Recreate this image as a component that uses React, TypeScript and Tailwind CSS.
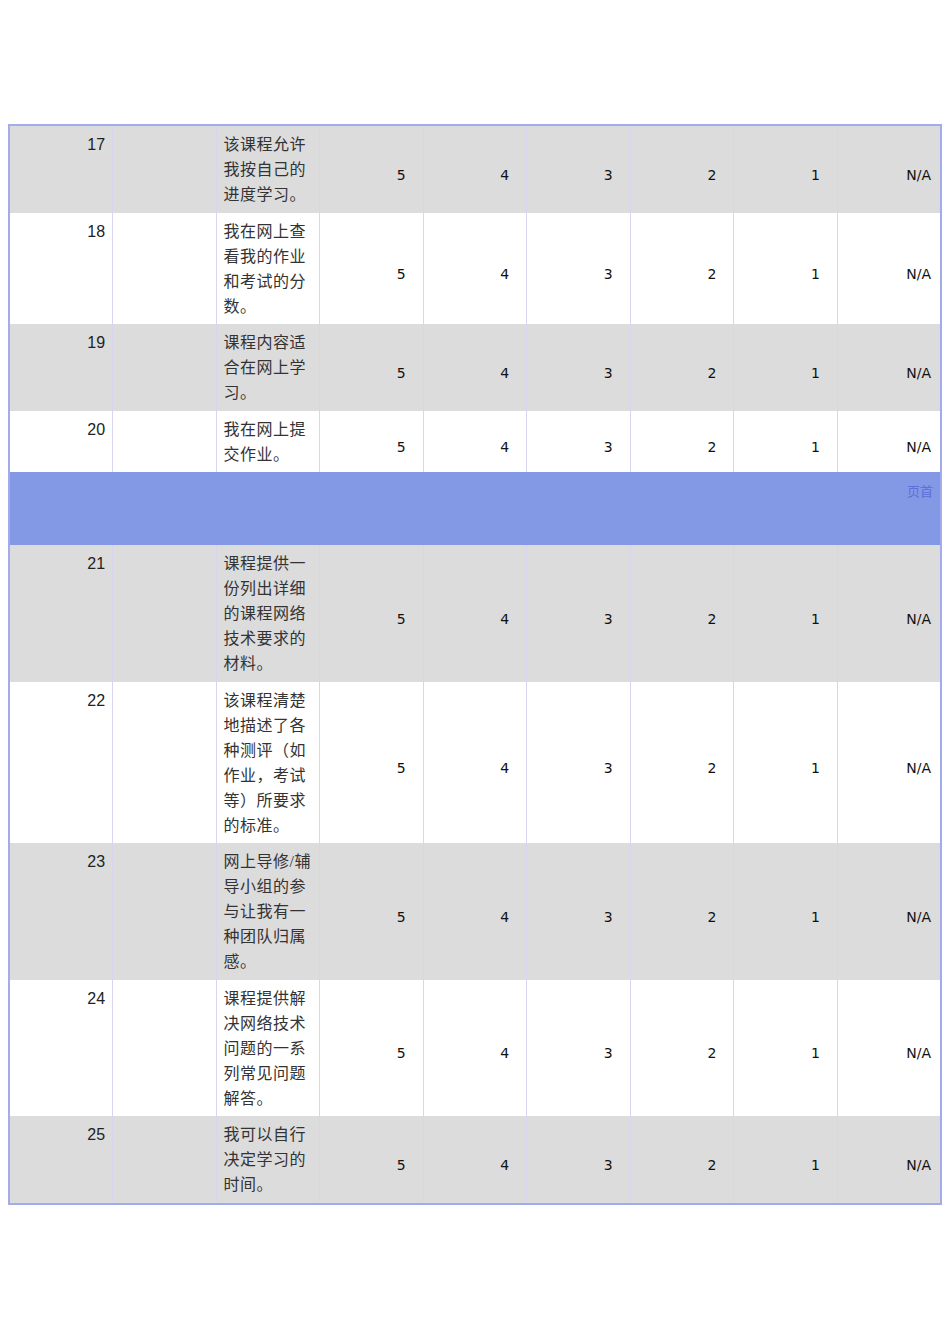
import React from 'react';

interface Row {
  no: number;
  text: string;
}

const rowsTop: Row[] = [
  { no: 17, text: '该课程允许我按自己的进度学习。' },
  { no: 18, text: '我在网上查看我的作业和考试的分数。' },
  { no: 19, text: '课程内容适合在网上学习。' },
  { no: 20, text: '我在网上提交作业。' },
];

const rowsBottom: Row[] = [
  { no: 21, text: '课程提供一份列出详细的课程网络技术要求的材料。' },
  { no: 22, text: '该课程清楚地描述了各种测评（如作业，考试等）所要求的标准。' },
  { no: 23, text: '网上导修/辅导小组的参与让我有一种团队归属感。' },
  { no: 24, text: '课程提供解决网络技术问题的一系列常见问题解答。' },
  { no: 25, text: '我可以自行决定学习的时间。' },
];

const scores = ['5', '4', '3', '2', '1'];

const App: React.FC = () => {
  const renderRow = (row: Row, gray: boolean) => (
    <tr key={row.no} className={gray ? 'bg-[#dcdcdc]' : 'bg-white'}>
      <td className="border-r border-[#d6d6ee] align-top pt-[6px] pb-[5.5px] pr-[7px] text-right font-['Liberation_Sans',Arial,sans-serif] text-[16px] leading-[25px] text-[#222]">
        {row.no}
      </td>
      <td className="border-r border-[#d6d6ee]"></td>
      <td className="border-r border-[#d6d6ee] align-top pt-[6px] pb-[5.5px] pl-[7px] pr-[6px] font-['Liberation_Serif','Noto_Sans_CJK_SC',serif] text-[16px] leading-[25px] tracking-[0.5px] text-[#333] break-all">
        {row.text}
      </td>
      {scores.map((s) => (
        <td
          key={s}
          className="border-r border-[#d6d6ee] align-middle text-right pt-[12px] pr-[17px] font-['DejaVu_Sans',sans-serif] text-[14px] text-[#111]"
        >
          {s}
        </td>
      ))}
      <td className="align-middle text-right pt-[12px] pr-[9px] font-['DejaVu_Sans',sans-serif] text-[14px] text-[#111]">
        N/A
      </td>
    </tr>
  );

  return (
    <div className="min-h-[1344px] w-[950px] bg-white pt-[124px] px-[8px]">
      <table className="w-full table-fixed border-collapse border-2 border-[#a3acea]">
        <colgroup>
          {Array.from({ length: 9 }).map((_, i) => (
            <col key={i} className="w-[11.111%]" />
          ))}
        </colgroup>
        <tbody>
          {rowsTop.map((r, i) => renderRow(r, i % 2 === 0))}
          {/* 页首 banner */}
          <tr className="bg-[#8499e5]">
            <td colSpan={9} className="h-[73px] align-top text-right pt-[12px] pr-[7px] font-['Liberation_Serif','Noto_Sans_CJK_SC',serif] text-[13px] leading-[16px] text-[#5b70d8]">
              页首
            </td>
          </tr>
          {rowsBottom.map((r, i) => renderRow(r, i % 2 === 0))}
        </tbody>
      </table>
    </div>
  );
};

export default App;
